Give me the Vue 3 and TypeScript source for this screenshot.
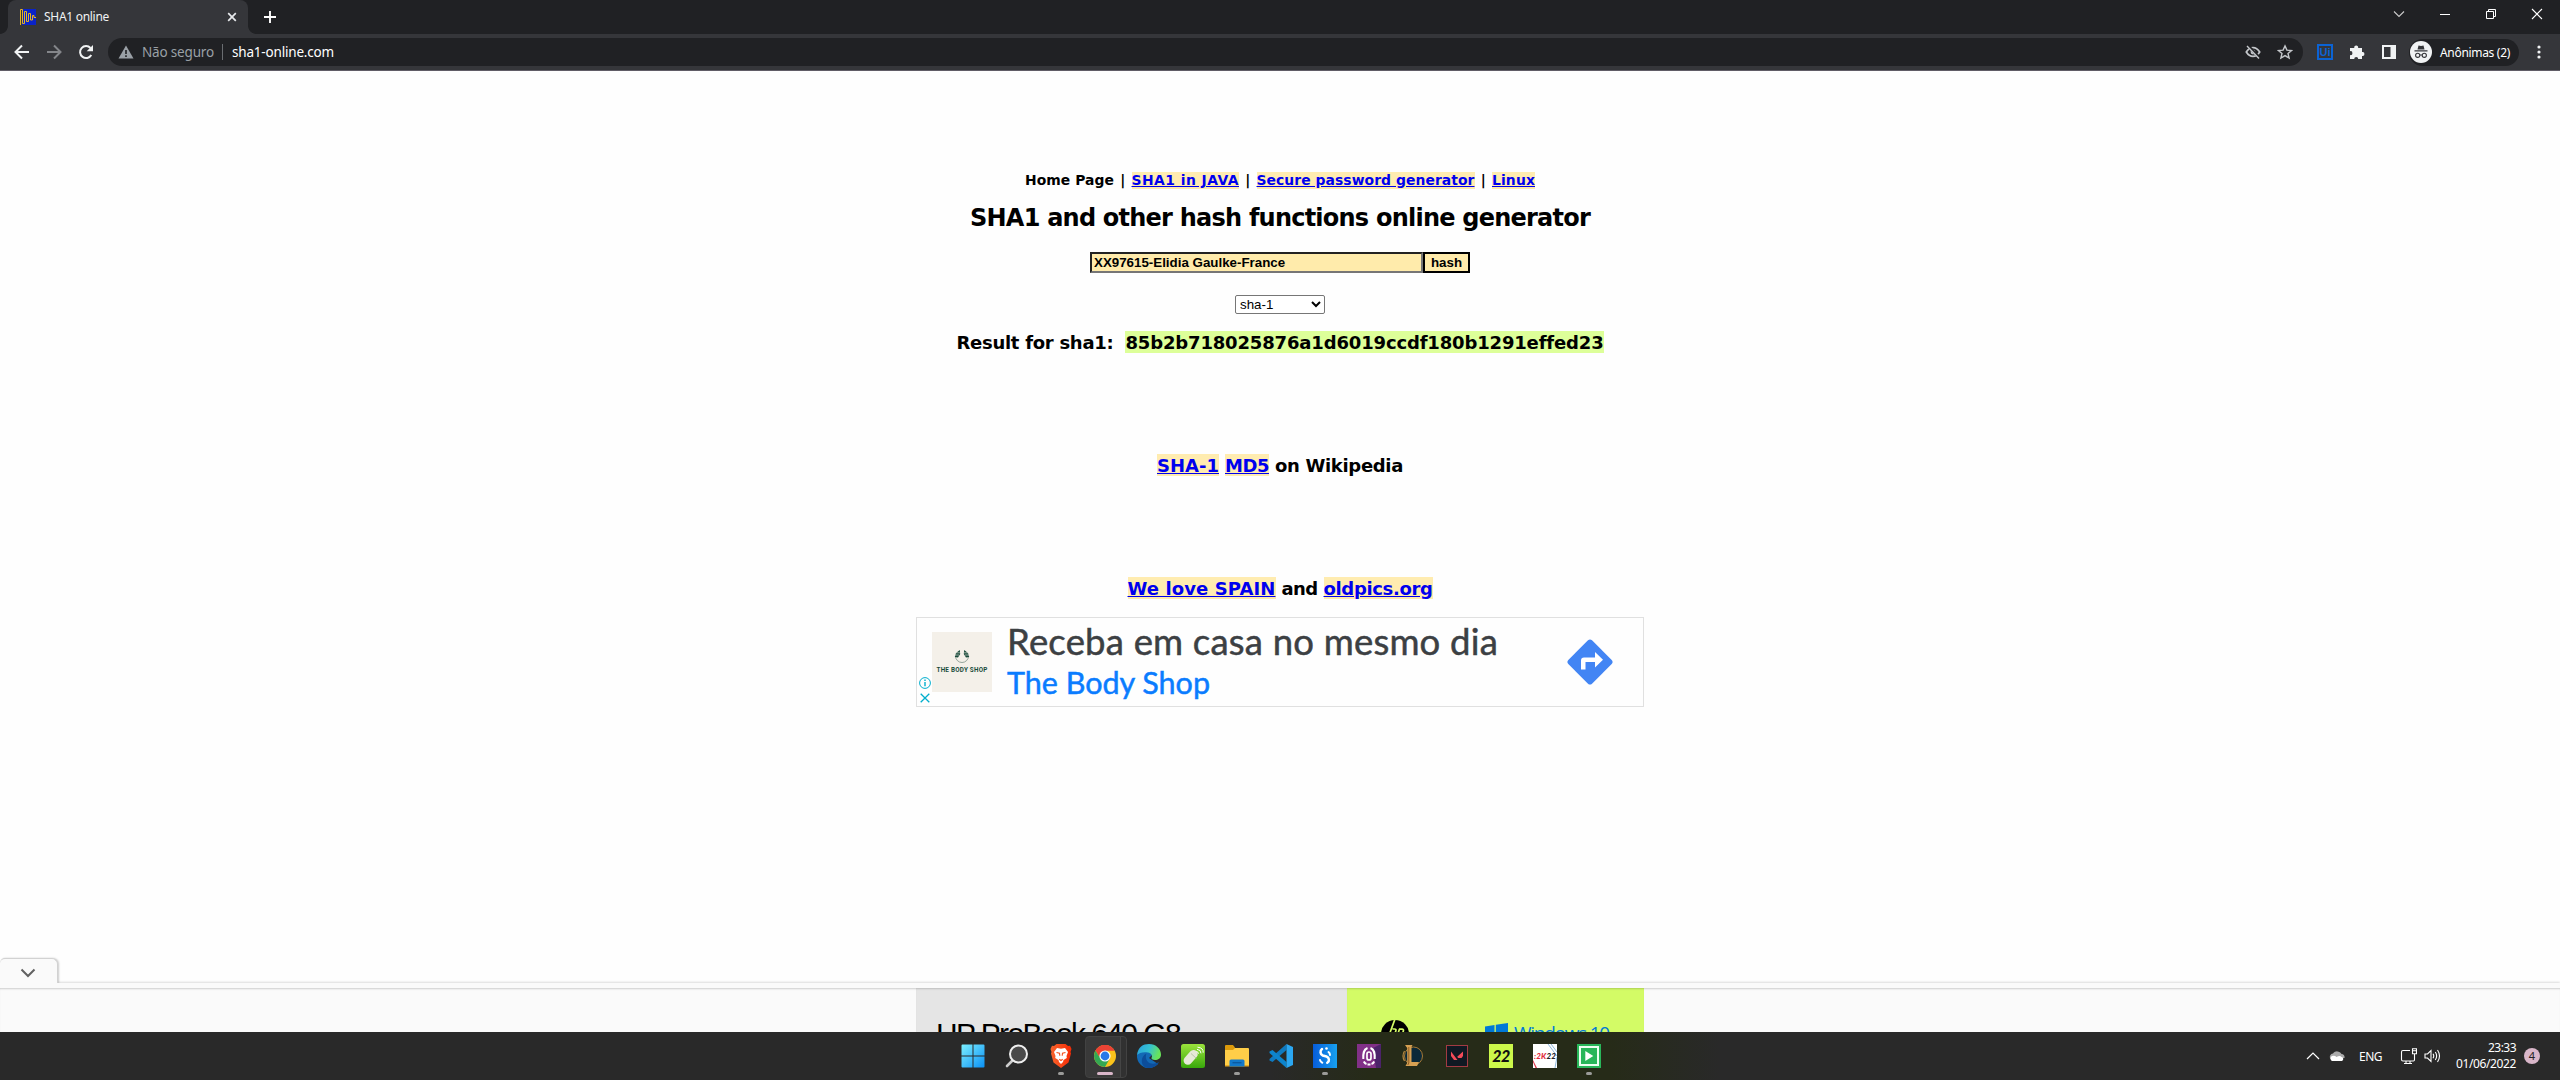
<script setup lang="ts">
import { ref } from 'vue'

// Spreads the letter spacing of a text run so that it fills the given width.
const vFit = {
  mounted(el: HTMLElement, binding: { value: number }) {
    const count = (el.textContent ?? '').length
    const natural = el.getBoundingClientRect().width
    el.style.letterSpacing = (binding.value - natural) / count + 'px'
  },
}

const text = ref('XX97615-Elidia Gaulke-France')
const algo = ref('sha-1')
</script>

<template>
  <div class="screen">
    <header class="tabs">
      <div class="tab">
        <svg class="fav" width="16" height="16" viewBox="0 0 16 16">
          <rect x="2" width="14" height="16" fill="#0a23c8" />
          <path d="M.5 16V.5h2v14h2v-12h2v10h2v-8h2v6.500h2v-4.500h1.500v2H16" fill="none" stroke="#e6b422" />
        </svg>
        <span v-fit="65" class="tab-title">SHA1 online</span>
        <svg class="tab-close" width="10" height="10" viewBox="0 0 10 10"><path d="M1.200 1.200l7.600 7.600M8.800 1.200L1.200 8.800" stroke="#e8eaed" stroke-width="1.700" /></svg>
      </div>
      <svg class="plus" width="12" height="12" viewBox="0 0 12 12"><path d="M6 0v12M0 6h12" stroke="#fff" stroke-width="1.900" /></svg>
      <div class="win">
        <svg width="12" height="12" viewBox="0 0 12 12"><path d="M1 3.500l5 5 5-5" fill="none" stroke="#ccc" stroke-width="1.100" /></svg>
        <svg width="12" height="12" viewBox="0 0 12 12"><path d="M1 6.500h10" stroke="#fff" /></svg>
        <svg width="12" height="12" viewBox="0 0 12 12"><path d="M1.500 3.500h7v7h-7zM3.500 3.500v-2h7v7h-2" fill="none" stroke="#fff" /></svg>
        <svg width="12" height="12" viewBox="0 0 12 12"><path d="M1 1l10 10M11 1L1 11" stroke="#fff" stroke-width="1.100" /></svg>
      </div>
    </header>

    <div class="toolbar">
      <svg class="nav-i" width="16" height="16" viewBox="0 0 16 16"><path d="M15 8H2.500M8 1.500L1.500 8 8 14.500" fill="none" stroke="#f1f3f4" stroke-width="2" /></svg>
      <svg class="nav-i" width="16" height="16" viewBox="0 0 16 16"><path d="M1 8h12.500M8 1.500L14.500 8 8 14.500" fill="none" stroke="#84868a" stroke-width="2" /></svg>
      <svg class="nav-i" width="16" height="16" viewBox="0 0 16 16"><path d="M13.300 11A6 6 0 1 1 12.500 4" fill="none" stroke="#f1f3f4" stroke-width="2" /><path d="M15 1v6.300H8.700z" fill="#f1f3f4" /></svg>
      <div class="omni">
        <svg width="16" height="14" viewBox="0 0 16 14"><path d="M8 .5L15.500 13.500H.5z" fill="#9aa0a6" /><path d="M8 5v4M8 10.300v1.600" stroke="#202124" stroke-width="1.600" /></svg>
        <span v-fit="72" class="insecure">Não seguro</span>
        <i class="bar"></i>
        <span v-fit="102" class="url">sha1-online.com</span>
        <svg class="eye" width="16" height="16" viewBox="0 0 16 16"><path d="M1.300 8Q4 3.600 8 3.600T14.700 8Q12 12.400 8 12.400T1.300 8z" fill="none" stroke="#c4c7cb" stroke-width="1.700" /><circle cx="8" cy="8" r="2.400" fill="#c4c7cb" /><path d="M2.800 1.500l11.500 12" stroke="#202124" stroke-width="3" /><path d="M2 2l12 12.500" stroke="#c4c7cb" stroke-width="1.400" /></svg>
        <svg class="star" width="16" height="16" viewBox="0 0 16 16"><path d="M8 1.900l1.900 4.200 4.600.4-3.500 3 1.100 4.500L8 11.600 3.900 14l1.100-4.500-3.500-3 4.600-.4z" fill="none" stroke="#c4c7cb" stroke-width="1.400" /></svg>
      </div>
      <div class="ui-ext">Ui</div>
      <svg class="puzzle" width="16" height="16" viewBox="0 0 16 16"><path d="M1 4h4.300a2 2 0 1 1 3.800 0H13v4a2 2 0 1 1 0 3.900V15H9.200a2 2 0 1 0-4 0H1v-3.900a2 2 0 1 0 0-3.900z" fill="#f1f3f4" /></svg>
      <svg class="side" width="14" height="14" viewBox="0 0 14 14"><path fill-rule="evenodd" d="M0 0h14v14H0zM2 2v10h6.500V2z" fill="#f1f3f4" /></svg>
      <div class="profile">
        <svg width="22" height="22" viewBox="0 0 22 22"><circle cx="11" cy="11" r="11" fill="#f1f3f4" /><path d="M7.500 8.500l1-4 2.500.6 2.500-.6 1 4zM4.500 9.300h13v1.200h-13z" fill="#35363a" /><circle cx="7.700" cy="14.300" r="2.100" fill="none" stroke="#35363a" stroke-width="1.100" /><circle cx="14.300" cy="14.300" r="2.100" fill="none" stroke="#35363a" stroke-width="1.100" /><path d="M9.800 14h2.400" stroke="#35363a" /></svg>
        <span v-fit="70">Anônimas (2)</span>
      </div>
      <svg class="dots" width="4" height="14" viewBox="0 0 4 14" fill="#f1f3f4"><circle cx="2" cy="2" r="1.600" /><circle cx="2" cy="7" r="1.600" /><circle cx="2" cy="12" r="1.600" /></svg>
    </div>

    <main class="page">
      <div class="row links">
        <span v-fit="89" class="run">Home Page</span><i>|</i><a v-fit="107.5">SHA1 in JAVA</a><i>|</i><a v-fit="218">Secure password generator</a><i>|</i><a v-fit="43">Linux</a>
      </div>
      <h1 class="row"><span v-fit="620" class="run">SHA1 and other hash functions online generator</span></h1>
      <div class="row form">
        <input v-model="text" class="field" />
        <button class="hash">hash</button>
      </div>
      <div class="row"><select v-model="algo" class="algo"><option>sha-1</option></select></div>
      <div class="row big result"><span v-fit="157" class="run">Result for sha1:</span><span v-fit="477" class="run digest">85b2b718025876a1d6019ccdf180b1291effed23</span></div>
      <div class="row big wiki"><a v-fit="62">SHA-1</a><a v-fit="44">MD5</a><span v-fit="128" class="run">on Wikipedia</span></div>
      <div class="row big spain"><a v-fit="148">We love SPAIN</a><span v-fit="36" class="run">and</span><a v-fit="109">oldpics.org</a></div>
      <section class="ad">
        <div class="ad-marks">
          <svg width="12" height="12" viewBox="0 0 12 12"><circle cx="6" cy="6" r="5.400" fill="none" stroke="#00aecd" /><path d="M6 5v4.300M6 2.600v1.400" stroke="#00aecd" stroke-width="1.400" /></svg>
          <svg width="10" height="10" viewBox="0 0 10 10"><path d="M.7.7l8.600 8.600M9.300.7L.7 9.300" stroke="#00aecd" stroke-width="1.300" /></svg>
        </div>
        <div class="ad-logo">
          <svg width="16" height="15" viewBox="0 0 16 15"><path d="M1.500 6A6.500 6.500 0 1 0 14.500 6" fill="none" stroke="#7b9187" stroke-width=".8" /><path d="M5.800 0L6.200 4 4 7.500.8 7 2 3zM10.200 0L9.800 4l2.200 3.500L15.200 7 14 3z" fill="#194b3b" /><path d="M1 5l4 0M2 2.800l4 0M15 5l-4 0M14 2.800l-4 0" stroke="#f4f0e9" stroke-width=".6" /></svg>
          <span v-fit="51">THE BODY SHOP</span>
        </div>
        <div class="ad-copy">
          <div class="ad-head"><span v-fit="491" class="run">Receba em casa no mesmo dia</span></div>
          <div class="ad-brand"><span v-fit="203" class="run">The Body Shop</span></div>
        </div>
        <svg class="ad-go" width="46" height="46" viewBox="0 0 46 46"><path d="M21 1.300Q23 -.5 25 1.300L44.700 21Q46.500 23 44.700 25L25 44.700Q23 46.500 21 44.700L1.300 25Q-.5 23 1.300 21z" fill="#4285f4" /><path d="M14 30.500V21.500Q14 18.500 17 18.500H28V13L36 20.800 28 28.500V23H18.500V30.500z" fill="#fff" /></svg>
      </section>
    </main>

    <div class="handle">
      <svg width="16" height="10" viewBox="0 0 16 10"><path d="M1.500 1.500L8 8l6.500-6.500" fill="none" stroke="#616161" stroke-width="2" /></svg>
    </div>
    <section class="anchor">
      <div class="banner">
        <div class="b-left"><span v-fit="244" class="run">HP ProBook 640 G8</span></div>
        <div class="b-right">
          <svg width="28" height="28" viewBox="0 0 28 28"><circle cx="14" cy="14" r="14" /><path d="M14-1L8.500 14M11.500 9h2q2 0 1.300 2l-1.500 4M18.500 9l-4 12M18 9.200h3q2 0 1.300 2l-1.500 4" fill="none" stroke="#d3fb66" stroke-width="1.700" /></svg>
          <svg class="b-win" width="23" height="24" viewBox="0 0 23 24"><path d="M0 3.500l9.500-1.500v10H0zM10.800 1.800L23 0v12H10.800zM0 13h9.500v9L0 21zM10.800 13H23v11l-12.200-2z" fill="#0078d7" /></svg>
          <span v-fit="95" class="run b-name">Windows 10</span>
        </div>
      </div>
    </section>

    <footer class="taskbar">
      <div class="apps">
        <div class="app"><svg viewBox="0 0 24 24"><defs><linearGradient id="win" x2="1" y2="1"><stop stop-color="#7cf0ff" /><stop offset="1" stop-color="#0a90f5" /></linearGradient></defs><path d="M1.500 .5H11.500V11.500H.5V1.500q0-1 1-1zM12.500.5h10q1 0 1 1v10h-11zM.5 12.500h11v11h-10q-1 0-1-1zM12.500 12.500h11v10q0 1-1 1h-10z" fill="url(#win)" /></svg></div>
        <div class="app"><svg viewBox="0 0 24 24"><path d="M7.500 16.500L2 22" stroke="#ccc" stroke-width="2.600" stroke-linecap="round" /><circle cx="13.500" cy="10" r="8.500" fill="#4a4a4a" stroke="#eee" stroke-width="2" /></svg></div>
        <div class="app on"><svg viewBox="0 0 24 24"><defs><linearGradient id="brave" x2="1"><stop stop-color="#f8642b" /><stop offset="1" stop-color="#f52a05" /></linearGradient></defs><path d="M7.500 0h9L19 2l2-.2L22.500 5 21.500 8l.5 1.500-2.500 9L12 24l-7.500-5.500L2 9.500 2.500 8 1.500 5 3 1.800 5 2z" fill="url(#brave)" /><path d="M12 4.800l4-.8 3 4-1.500 4 .3 2-3.300 2-.5 2L12 20l-2-2-.5-2-3.300-2 .3-2L5 8l3-4z" fill="#fff" /><path d="M7.500 8.500l3 .7.300 2.600M16.500 8.500l-3 .7-.3 2.600M10.300 15.300L12 16.500l1.700-1.200" fill="none" stroke="#f44f1c" stroke-width="1.100" /></svg></div>
        <div class="app chrome"><svg viewBox="0 0 24 24"><circle cx="12" cy="12" r="11" fill="#fbc31b" /><path d="M2.500 6.500A11 11 0 0 1 21.500 6.500H12L7.200 14.700z" fill="#ea4335" /><path d="M2.500 6.500A11 11 0 0 0 12 23l4.700-8.200L12 12H5.700z" fill="#34a853" /><path d="M2.500 6.500A11 11 0 0 1 21.500 6.500H12A5.500 5.500 0 0 0 6.800 10z" fill="#ea4335" /><circle cx="12" cy="12" r="5.600" fill="#fff" /><circle cx="12" cy="12" r="4.400" fill="#2879e8" /></svg></div>
        <div class="app"><svg viewBox="0 0 24 24"><defs><linearGradient id="edge" x2="1" y2=".3"><stop stop-color="#279fdf" /><stop offset=".55" stop-color="#35c1d0" /><stop offset="1" stop-color="#68e45a" /></linearGradient></defs><path d="M0 11A12 12 0 0 1 12 2l3 9-3 3 9 6A12 12 0 0 1 0 11z" fill="#1369b5" /><path d="M0 11C1 3 6 0 12 0c7 0 12 5 12 10.500 0 4-3 5.500-6 5.500-2.500 0-4-1-3.500-2.200C16 11.500 14 9 11 8.500 6 7.500 2 9 0 11z" fill="url(#edge)" /><path d="M9.500 9.500C7.500 14 10 19.500 16 19.700q3 0 6.300-1.700C19 24 12 25 8 23.300 3 20 4 12 9.500 9.500z" fill="#0c4d9a" /></svg></div>
        <div class="app"><svg viewBox="0 0 24 24"><defs><linearGradient id="lime" x2="0" y2="1"><stop stop-color="#9be33c" /><stop offset="1" stop-color="#38a80b" /></linearGradient></defs><rect width="24" height="24" rx="2.500" fill="url(#lime)" /><rect x="5.800" y="5" width="8.400" height="17" rx="4.200" transform="rotate(42 10 13)" fill="#e6e9d8" /><path d="M10 9.500l5.500 5" stroke="#a9b69a" stroke-width=".7" /><path d="M15.500 7.500q2 .5 2 2.200M16 5.300q4 .5 4 4M16.500 3.200q6 .5 5.700 5.500" fill="none" stroke="#fff" stroke-width="1" /></svg></div>
        <div class="app on"><svg viewBox="0 0 24 24"><path d="M0 2q0-1 1-1h7l2 2.500V8H0z" fill="#dc9a0b" /><path d="M0 6h8l2-2h13q1 0 1 1v17H0z" fill="#ffce48" /><path d="M0 21h24v1.500H0z" fill="#e9a920" /><path d="M4.500 22.500V17q0-1.500 1.500-1.500h12q1.500 0 1.500 1.500v5.500z" fill="#1279ca" /><path d="M7.500 18.700h9" stroke="#0c599d" stroke-width="1.300" /></svg></div>
        <div class="app"><svg viewBox="0 0 24 24"><path d="M17.500 0v6L3.500 18 .5 16.500V15z" fill="#0f7ac0" /><path d="M.5 9V7.500L3.500 6l14 12v6z" fill="#0d84cc" /><path d="M17.500 0L24 3v18l-6.500 3z" fill="#2ba7f1" /></svg></div>
        <div class="app on"><svg viewBox="0 0 24 24"><defs><linearGradient id="ess" x2="1"><stop stop-color="#075ddb" /><stop offset="1" stop-color="#17a0ef" /></linearGradient></defs><rect width="24" height="24" fill="url(#ess)" /><path d="M9 5a3.800 3.800 0 0 0 .8 6.500l3.700 1a3.500 3.500 0 0 1 .8 6.300" fill="none" stroke="#fff" stroke-width="2.500" stroke-linecap="round" /><path d="M15.500 8q1.500 1 1.500 3M7 16q.5 2 2.300 2.700" fill="none" stroke="#fff" stroke-width="2" stroke-linecap="round" /><circle cx="13.500" cy="4.500" r="1.300" fill="#fff" /></svg></div>
        <div class="app"><svg viewBox="0 0 24 24"><rect width="24" height="24" fill="#813087" /><path d="M24 0v24h-5L16 4z" fill="#4c236a" /><path d="M10.500 4C6.500 5.500 6 9 6.300 15M13.500 4c4 1.500 4.500 5 4.200 11M6.800 17.500q1 2 2.700 2.500M17.200 17.500q-1 2-2.700 2.500" fill="none" stroke="#fff" stroke-width="2" /><rect x="10" y="8" width="4" height="8" rx="2" fill="none" stroke="#fff" stroke-width="1.700" /><path d="M10.500 20.500h3" stroke="#fff" stroke-width="2" /></svg></div>
        <div class="app"><svg viewBox="0 0 24 24"><circle cx="12.500" cy="12" r="9" fill="#0b2939" stroke="#a67936" stroke-width="1" /><path d="M3.500 7Q.5 12 3.500 17" fill="none" stroke="#b78a43" stroke-width="1.200" /><path d="M4 1h7.500l-1 2V18H18l-2 4H4.500l1.700-3V4z" fill="#d6a052" /><path d="M7.800 3v16l-1 2" fill="none" stroke="#8e5c24" stroke-width="1" /></svg></div>
        <div class="app"><svg viewBox="0 0 24 24"><rect x="1.500" y="1.500" width="21" height="21" fill="#101923" stroke="#a23b43" /><path d="M6 7.500l6.500 8.500H9L6 12zM18 7.500V12l-1.500 2H13.200l-1-1.300z" fill="#f34b58" /></svg></div>
        <div class="app"><div class="fut">22</div></div>
        <div class="app"><div class="nba"><svg viewBox="0 0 24 24"><path d="M0 16l4 8H2.500L0 18z" fill="#df3549" /><path d="M18 0l6 8M15 0l9 12M24 13l-2 11" stroke="#8eb9dc" stroke-width="1" fill="none" /></svg><span v-fit="22"><b>:2K</b>22</span></div></div>
        <div class="app on"><svg viewBox="0 0 24 24"><rect width="24" height="24" fill="#29b65a" /><rect x="3" y="3" width="18" height="18" fill="#29b65a" stroke="#eefff2" stroke-width="2" /><path d="M8.300 7l8 5-8 5z" fill="#fff" /></svg></div>
      </div>
      <div class="tray">
        <svg class="t-up" width="14" height="8" viewBox="0 0 14 8"><path d="M1 7l6-6 6 6" fill="none" stroke="#fff" stroke-width="1.200" /></svg>
        <svg class="t-cloud" width="16" height="10" viewBox="0 0 16 10"><path d="M1.500 8A3.500 3.500 0 0 1 4 2.500 5 5 0 0 1 12.500 3 3.500 3.500 0 0 1 15.500 7z" fill="#aaa" /><path d="M3 10A2.800 2.800 0 0 1 3 5q3-.6 4.500 1 3.500-2 5 0a2.100 2.100 0 0 1 .5 4z" fill="#fff" /></svg>
        <span v-fit="23" class="t-eng">ENG</span>
        <svg class="t-net" width="17" height="17" viewBox="0 0 17 17"><path d="M10 2.500H3Q1.500 2.500 1.500 4v7.500Q1.500 13 3 13h10.500q1 0 1-1.500V6M4 15.500h8M6 13v2.500M10 13v2.500M12.500.8h4v5h-4zM13 2.800h3" fill="none" stroke="#fff" stroke-width="1.100" /></svg>
        <svg class="t-vol" width="17" height="14" viewBox="0 0 17 14"><path d="M1 5h2.500L7 1.500v11L3.500 9H1zM9 4.800q1.500 2.200 0 4.400M11.300 3q2.700 4 0 8M13.500 1q4 6 0 12" fill="none" stroke="#fff" stroke-width="1.100" /></svg>
        <div class="clock"><span v-fit="28">23:33</span><span v-fit="60">01/06/2022</span></div>
        <div class="badge">4</div>
      </div>
    </footer>
  </div>
</template>

<style>
body {
  margin: 0;
  background: #fff;
}
</style>

<style scoped>
.screen {
  width: 2560px;
  height: 1080px;
  overflow: hidden;
  display: flex;
  flex-direction: column;
  background: #fefefe;
  color: #000;
  font-family: 'Noto Sans', 'Open Sans', sans-serif;
}
.screen * {
  box-sizing: border-box;
}
svg {
  display: block;
  flex: none;
}
span {
  white-space: pre;
}
.tabs {
  height: 34px;
  flex: none;
  background: #202124;
  display: flex;
  align-items: center;
  padding-left: 8px;
}
.tab {
  width: 240px;
  height: 34px;
  background: #35363a;
  border-radius: 8px 8px 0 0;
  display: flex;
  align-items: center;
  padding: 0 11px 0 12px;
  position: relative;
}
.tab::before,
.tab::after {
  content: '';
  position: absolute;
  bottom: 0;
  width: 8px;
  height: 8px;
}
.tab::before {
  left: -8px;
  background: radial-gradient(circle at 0 0, #202124 7.5px, #35363a 8.2px);
}
.tab::after {
  right: -8px;
  background: radial-gradient(circle at 100% 0, #202124 7.5px, #35363a 8.2px);
}
.tab-title {
  margin-left: 8px;
  font-size: 12px;
  line-height: 16px;
  padding-bottom: 1px;
  color: #f1f3f4;
}
.tab-close {
  margin-left: auto;
}
.plus {
  margin-left: 16px;
}
.win {
  margin: -6px 17px 0 auto;
  display: flex;
  gap: 34px;
}
.toolbar {
  height: 37px;
  flex: none;
  background: #35363a;
  border-bottom: 1px solid #605c66;
  display: flex;
  align-items: center;
  padding-left: 14px;
}
.nav-i {
  margin-right: 16px;
}
.nav-i + .nav-i + .nav-i {
  margin-right: 14px;
}
.omni {
  width: 2195px;
  height: 28px;
  border-radius: 14px;
  background: #202124;
  display: flex;
  align-items: center;
  padding: 0 10px;
  font-size: 13.5px;
}
.insecure {
  color: #9aa0a6;
  margin-left: 8px;
}
.bar {
  width: 1px;
  height: 16px;
  background: #6a6d71;
  margin: 0 9px 0 8px;
}
.url {
  color: #fff;
}
.eye {
  margin-left: auto;
  margin-right: 16px;
}
.ui-ext {
  width: 16px;
  height: 16px;
  margin-left: 14px;
  border: 2px solid #0b63d4;
  color: #0b63d4;
  font: 700 11px/12px 'Liberation Sans', sans-serif;
  text-align: center;
}
.puzzle {
  margin-left: 16px;
}
.side {
  margin-left: 17px;
}
.profile {
  width: 110px;
  height: 27px;
  margin-left: 13px;
  border-radius: 14px;
  background: #202124;
  display: flex;
  align-items: center;
  padding-left: 1px;
  gap: 8px;
  font-size: 12px;
  color: #fff;
}
.dots {
  margin-left: 18px;
}
.page {
  flex: 1;
  padding-top: 100px;
  display: flex;
  flex-direction: column;
  align-items: center;
  font-family: 'DejaVu Sans', Verdana, sans-serif;
  font-weight: 700;
}
.row {
  display: flex;
  justify-content: center;
  align-items: center;
}
.run {
  display: inline-block;
}
.page a {
  display: inline-block;
  white-space: pre;
  background: #ffecb0;
  color: #0000ee;
  text-decoration: underline;
}
.links {
  height: 17px;
  font-size: 13.9px;
  line-height: 17px;
  padding-top: 1px;
}
.links a {
  height: 17px;
}
.links i {
  width: 17.5px;
  text-align: center;
  font-style: normal;
}
h1.row {
  margin: 16px 0 0;
  height: 28px;
  font-size: 24px;
}
.form {
  margin-top: 20px;
}
.field {
  width: 333px;
  height: 21px;
  padding: 0 2px;
  margin: 0;
  border: 2px solid;
  border-color: #222 #767676 #767676 #222;
  background: #ffebab;
  font: 700 13.33px 'Liberation Sans', sans-serif;
  outline: none;
  border-radius: 0;
}
.hash {
  width: 47px;
  height: 21px;
  padding: 0;
  border: 2px solid #000;
  border-radius: 0;
  background: #ffebab;
  color: #000;
  font: 700 13.33px 'Liberation Sans', sans-serif;
}
.algo {
  margin-top: 22px;
  width: 90px;
  height: 19px;
  font: 13.33px 'Liberation Sans', sans-serif;
  border: 1px solid #767676;
  border-radius: 2px;
  background: #fff;
}
.big {
  height: 22px;
  font-size: 18px;
  line-height: 23px;
  gap: 6px;
}
.big a,
.big .run {
  height: 22px;
}
.result {
  margin-top: 17px;
  gap: 12px;
}
.digest {
  background: #ddff99;
}
.wiki {
  margin-top: 101px;
}
.spain {
  margin-top: 101px;
}
.ad {
  width: 728px;
  height: 90px;
  margin-top: 18px;
  border: 1px solid #e0e0e0;
  display: flex;
  align-items: center;
  font-weight: 400;
}
.ad-marks {
  width: 15px;
  height: 29px;
  align-self: flex-end;
  display: flex;
  flex-direction: column;
  align-items: center;
  gap: 4px;
}
.ad-logo {
  width: 60px;
  height: 60px;
  background: #f4f0e9;
  display: flex;
  flex-direction: column;
  align-items: center;
  padding-top: 18px;
}
.ad-logo span {
  font: 700 6.3px/9px Roboto, sans-serif;
  color: #194b3b;
  margin-top: 1px;
}
.ad-copy {
  margin-left: 15px;
  height: 88px;
  font-family: Lato, sans-serif;
}
.ad-head {
  height: 47px;
  line-height: 46px;
  font-size: 36.5px;
  color: #3c4043;
  -webkit-text-stroke: 0.5px #3c4043;
}
.ad-brand {
  height: 34px;
  line-height: 34px;
  font-size: 30.5px;
  color: #0a7cff;
  -webkit-text-stroke: 0.5px #0a7cff;
}
.ad-go {
  margin: 0 30px 0 auto;
}
.handle {
  width: 58px;
  height: 25px;
  flex: none;
  background: #fafafa;
  border: solid #d2d2d2;
  border-width: 1px 1px 0 0;
  border-radius: 5px 6px 0 0;
  box-shadow: 1px 0 2px rgba(0, 0, 0, 0.2);
  display: flex;
  align-items: center;
  padding: 3px 0 0 20px;
}
.anchor {
  height: 49px;
  flex: none;
  background: #fafafa;
  padding-top: 5px;
  box-shadow: 0 -1px 2px rgba(0, 0, 0, 0.14);
  clip-path: polygon(58px -3px, 100% -3px, 100% 100%, 0 100%, 0 0, 58px 0);
}
.banner {
  height: 44px;
  overflow: hidden;
  display: flex;
  justify-content: center;
  box-shadow: inset 0 2px 2px -1px rgba(0, 0, 0, 0.18);
}
.b-left {
  width: 431px;
  background: #e5e5e5;
  padding: 29px 0 0 20px;
  font: 30px/34px 'Liberation Sans', sans-serif;
}
.b-right {
  width: 297px;
  background: #d3fb66;
  padding: 32px 0 0 34px;
  display: flex;
}
.b-left,
.b-right {
  box-shadow: inset 0 2px 2px -1px rgba(0, 0, 0, 0.18);
}
.b-win {
  margin: 3px 0 0 76px;
}
.b-name {
  margin: 0 0 0 6px;
  font: 19px/27px 'Open Sans', sans-serif;
  color: #0078d7;
}
.taskbar {
  height: 48px;
  flex: none;
  background: linear-gradient(90deg, #292929 1270px, #262b18 1370px, #262b18 1610px, #292929 1720px);
  display: flex;
  align-items: center;
  padding-left: 951px;
}
.apps {
  display: flex;
}
.app {
  width: 44px;
  height: 48px;
  padding: 12px 10px;
  position: relative;
}
.app svg {
  width: 24px;
  height: 24px;
}
.on::after,
.chrome::after {
  content: '';
  position: absolute;
  bottom: 5px;
  left: 19px;
  width: 6px;
  height: 3px;
  border-radius: 2px;
  background: #9b9b99;
}
.chrome::after {
  left: 14px;
  width: 16px;
  background: #d9b6c9;
}
.chrome::before {
  content: '';
  position: absolute;
  left: 2px;
  top: 4px;
  width: 40px;
  height: 40px;
  border-radius: 4px;
  border: 1px solid #424242;
  background: linear-gradient(90deg, #393939 34px, #454545 34px, #454545 35px, #313131 35px);
}
.chrome svg {
  position: relative;
}
.fut {
  width: 24px;
  height: 24px;
  background: #ccf84a;
  color: #111;
  font: italic 900 16px/24px Lato, 'Liberation Sans', sans-serif;
  letter-spacing: -0.5px;
  text-align: center;
}
.nba {
  width: 24px;
  height: 24px;
  background: #fff;
  position: relative;
}
.nba span {
  position: absolute;
  left: 1px;
  top: 7px;
  font: italic 900 8px/10px Lato, sans-serif;
  color: #20242c;
}
.nba b {
  color: #e22b3c;
  font-weight: 900;
}
.tray {
  margin-left: auto;
  display: flex;
  align-items: center;
  color: #fff;
  font-size: 12px;
}
.t-cloud {
  margin-left: 9px;
}
.t-eng {
  margin-left: 14px;
}
.t-net {
  margin-left: 18px;
}
.t-vol {
  margin-left: 7px;
}
.clock {
  width: 60px;
  margin-left: 15px;
  display: flex;
  flex-direction: column;
  align-items: flex-end;
  line-height: 16px;
}
.badge {
  width: 16px;
  height: 16px;
  margin: 0 20px 0 8px;
  border-radius: 50%;
  background: #d9b6c9;
  color: #222;
  font-size: 11px;
  line-height: 16px;
  text-align: center;
}
</style>
